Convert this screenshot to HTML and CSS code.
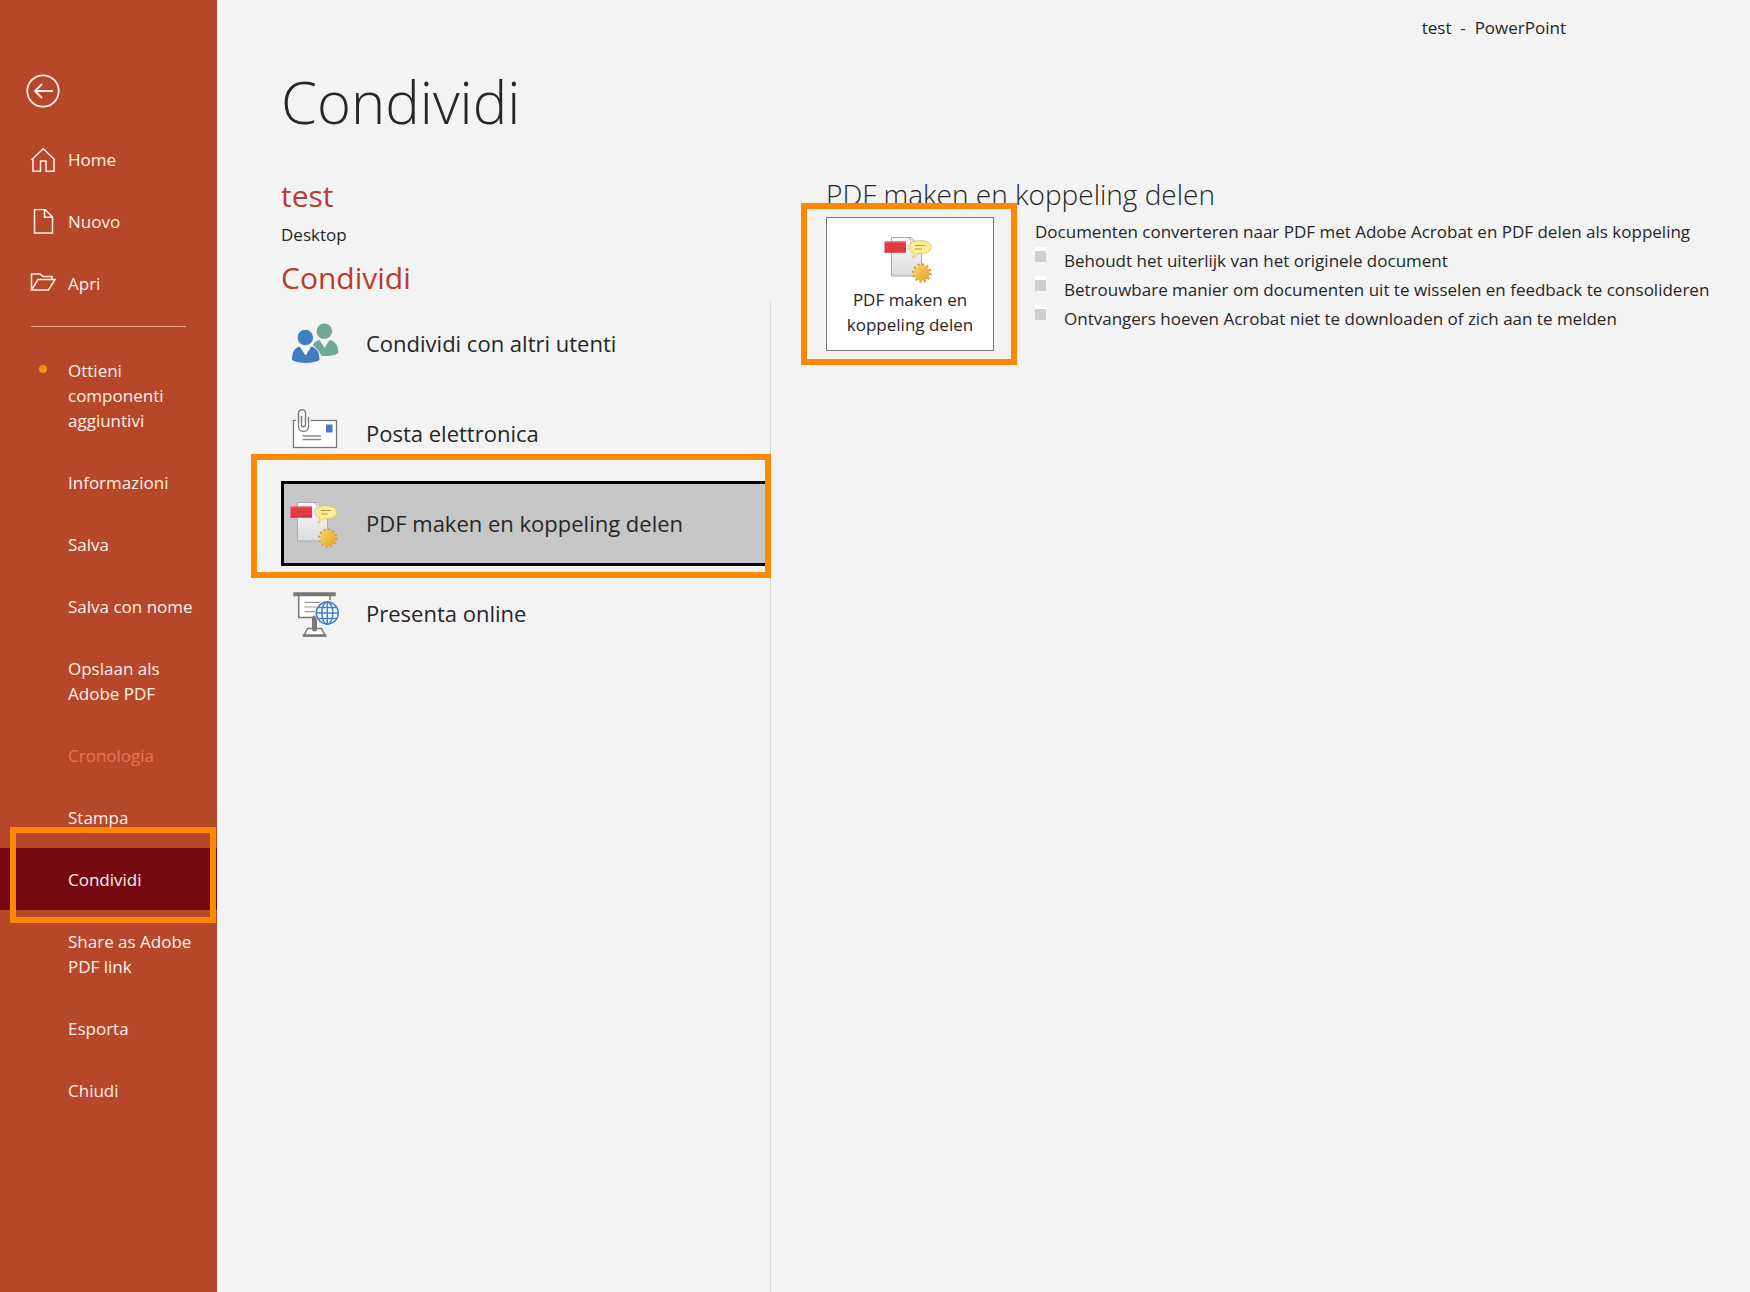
FILE: index.html
```html
<!DOCTYPE html>
<html lang="it">
<head>
  <meta charset="UTF-8">
  <meta name="viewport" content="width=device-width, initial-scale=1.0">
  <title>test - PowerPoint</title>
  <link rel="stylesheet" href="styles.css">
</head>
<body>
  <!-- shared icon, used in the list and on the card -->
  <svg class="sprite" width="0" height="0" aria-hidden="true">
    <defs>
      <linearGradient id="page" x1="0" y1="0" x2="0" y2="1">
        <stop offset="0" stop-color="#fbfbfb"/>
        <stop offset="1" stop-color="#dcdcde"/>
      </linearGradient>
      <linearGradient id="gold" x1="0" y1="0" x2="1" y2="1">
        <stop offset="0" stop-color="#fbd568"/>
        <stop offset="1" stop-color="#e0a22c"/>
      </linearGradient>
    </defs>
    <symbol id="pdf" viewBox="0 0 52 48">
      <path d="M7.5 2.5H27L37.5 13V41H7.5Z" fill="url(#page)" stroke="#a9a9ab"/>
      <path d="M24 2.5C27 4 27 7 26 10L32 8Z" fill="#fff" stroke="#a9a9ab" stroke-width=".7"/>
      <rect x=".5" y="6.5" width="21.5" height="11" fill="#e23a43"/>
      <path d="M.5 7H22" stroke="#ef7078"/>
      <path d="M.5 17H22" stroke="#c92c36"/>
      <path d="M36 5.7c6.5 0 11.2 2.600 11.200 6.500s-4.700 6.500-11.200 6.500c-.8 0-1.500 0-2.200-.1-1.300 2-3 3.600-6 4.400 1.500-1.700 2.200-3.300 2-5-3-1.200-5-3.200-5-5.800 0-3.900 4.700-6.500 11.200-6.500Z" fill="#fbec96" stroke="#d5bd55" stroke-width=".8"/>
      <path d="M31 10.500H41M31 14H38" stroke="#b39a45" stroke-width="1.200"/>
      <circle cx="37.700" cy="38" r="8.400" fill="none" stroke="#d99f2b" stroke-width="2.600" stroke-dasharray="2.200 2.200"/>
      <circle cx="37.700" cy="38" r="7.700" fill="url(#gold)"/>
    </symbol>
  </svg>

  <div class="app">
    <nav class="sidebar">
      <button class="back" type="button" aria-label="Indietro">
        <svg width="34" height="34" viewBox="0 0 34 34" fill="none" stroke="currentColor" stroke-width="1.800">
          <circle cx="17" cy="17" r="15.700"/>
          <path d="M27 17H9M16 10L9 17L16 24"/>
        </svg>
      </button>

      <a class="nav-item" href="#">
        <svg class="nav-icon" viewBox="0 0 26 26"><path d="M1.500 13L13.300 1.800L25 13M3 11.800V24.200H10.500V14H16V24.200H24V11.800"/></svg>
        <span>Home</span>
      </a>
      <a class="nav-item" href="#">
        <svg class="nav-icon" viewBox="0 0 26 26"><path d="M4.500 .5H15L22.500 8V24H4.500ZM14.500 .5V8.300H22.500"/></svg>
        <span>Nuovo</span>
      </a>
      <a class="nav-item" href="#">
        <svg class="nav-icon" viewBox="0 0 26 26"><path d="M1.500 19V3H10L13 5.500H22V8.500M1.500 19L8 8.500H25L18.500 19Z"/></svg>
        <span>Apri</span>
      </a>

      <hr class="divider">

      <a class="nav-item" href="#"><i class="dot"></i><span>Ottieni componenti aggiuntivi</span></a>
      <a class="nav-item text-only" href="#">Informazioni</a>
      <a class="nav-item text-only" href="#">Salva</a>
      <a class="nav-item text-only" href="#">Salva con nome</a>
      <a class="nav-item text-only" href="#">Opslaan als Adobe PDF</a>
      <a class="nav-item text-only disabled" href="#" aria-disabled="true">Cronologia</a>
      <a class="nav-item text-only" href="#">Stampa</a>
      <a class="nav-item text-only active" href="#">Condividi<i class="marker marker-nav"></i></a>
      <a class="nav-item text-only" href="#">Share as Adobe PDF link</a>
      <a class="nav-item text-only" href="#">Esporta</a>
      <a class="nav-item text-only" href="#">Chiudi</a>
    </nav>

    <main class="main">
      <div class="titlebar">test&nbsp; -&nbsp; PowerPoint</div>
      <h1>Condividi</h1>

      <div class="columns">
        <section class="share">
          <h2 class="red">test</h2>
          <p class="location">Desktop</p>
          <h2 class="red">Condividi</h2>

          <div class="options">
            <button class="option" type="button">
              <svg class="option-icon" viewBox="0 0 52 48">
                <circle cx="36.300" cy="11.300" r="7.800" fill="#72a893"/>
                <path d="M25 25C27 21.500 29 20.500 31.500 20L36.500 28L41.500 20C47 21 50.300 25 50.300 33C47 35.500 40 36.300 34 36Z" fill="#72a893"/>
                <path d="M3.500 40C3.500 32 6 27.500 12 26L17.500 35L23 26C29 27.500 32 32 32 40C27 44.500 8 44.500 3.500 40Z" fill="#3f7dbe" stroke="#f3f3f3" stroke-width="1"/>
                <path d="M12.500 26H22.500L17.500 34Z" fill="#fff"/>
                <circle cx="17.300" cy="17.500" r="8.200" fill="#3f7dbe" stroke="#f3f3f3" stroke-width="1"/>
              </svg>
              <span>Condividi con altri utenti</span>
            </button>
            <button class="option" type="button">
              <svg class="option-icon" viewBox="0 0 52 48" fill="none" stroke="#777" stroke-width="1.300">
                <rect x="5.500" y="10.500" width="43" height="27" fill="#fff"/>
                <path d="M8 10.500H22.500" stroke="#f3f3f3" stroke-width="3"/>
                <path d="M10.500 6V16.500C10.500 23 20.500 23 20.500 16.500V7M10.500 16V3.500C10.500-1.800 17.500-1.800 17.500 3.500V14.500C17.500 17.500 13.500 17.500 13.500 14.500V6"/>
                <rect x="38" y="14.500" width="6.500" height="8" fill="#3f7dbe" stroke="none"/>
                <path d="M14.500 26H33M14.500 29.500H33" stroke="#888"/>
              </svg>
              <span>Posta elettronica</span>
            </button>
            <button class="option selected" type="button">
              <svg class="option-icon" viewBox="-2 0 52 48"><use href="#pdf" width="52" height="48"/></svg>
              <span>PDF maken en koppeling delen</span>
              <i class="marker marker-option"></i>
            </button>
            <button class="option" type="button">
              <svg class="option-icon" viewBox="-2 0 52 48" fill="none" stroke="#777" stroke-width="1.500">
                <path d="M8.700 6V27.500H27L40 20V6Z" fill="#fff" stroke="none"/>
                <path d="M8.700 6V27.500H25M40 6V10"/>
                <path d="M3.300 4.300H45.700" stroke-width="4"/>
                <path d="M14.500 12.300H30M14.500 17H27M14.500 21.700H25" stroke="#999" stroke-width="1.200"/>
                <path d="M17.500 38.500H31.500L35 45.500H14Z" fill="#fff"/>
                <path d="M12.700 45.600H36.500" stroke-width="2.500"/>
                <path d="M24.500 28V39" stroke-width="5" stroke-linecap="round"/>
                <circle cx="37.300" cy="23" r="12.300" fill="#f3f3f3" stroke="none"/>
                <g stroke="#4080cc">
                  <circle cx="37.300" cy="23" r="11" fill="#fff"/>
                  <ellipse cx="37.300" cy="23" rx="5.500" ry="11"/>
                  <path d="M37.300 12V34M26.300 23H48.300M28.300 17.500H46.300M28.300 28.500H46.300"/>
                </g>
              </svg>
              <span>Presenta online</span>
            </button>
          </div>
        </section>

        <section class="detail">
          <h2>PDF maken en koppeling delen</h2>
          <div class="detail-body">
            <button class="card" type="button">
              <svg class="option-icon"><use href="#pdf"/></svg>
              <span>PDF maken en koppeling delen</span>
              <i class="marker marker-card"></i>
            </button>
            <div class="description">
              <p>Documenten converteren naar PDF met Adobe Acrobat en PDF delen als koppeling</p>
              <ul>
                <li>Behoudt het uiterlijk van het originele document</li>
                <li>Betrouwbare manier om documenten uit te wisselen en feedback te consolideren</li>
                <li>Ontvangers hoeven Acrobat niet te downloaden of zich aan te melden</li>
              </ul>
            </div>
          </div>
        </section>
      </div>
    </main>
  </div>
</body>
</html>
```
FILE: styles.css
```css
* {
  box-sizing: border-box;
}
body {
  margin: 0;
  font-family: "Segoe UI", "Open Sans", "Noto Sans", sans-serif;
  font-size: 17px;
  font-weight: 500;
  line-height: 25px;
  color: #262626;
  background-color: #f3f3f3;
}
h1, h2, p, ul {
  margin: 0;
  padding: 0;
}
button {
  font: inherit;
  color: inherit;
  cursor: pointer;
}
.sprite {
  position: absolute;
}
.app {
  display: flex;
  min-height: 100vh;
}

/* sidebar */
.sidebar {
  flex: 0 0 217px;
  padding-top: 74px;
  background-color: #b7472a;
  color: #fff0e8;
}
.back {
  display: block;
  width: 34px;
  height: 34px;
  margin: 0 0 20px 26px;
  padding: 0;
  border: none;
  background: none;
}
.back svg {
  display: block;
}
.nav-item {
  display: flex;
  gap: 12px;
  padding: 19px 12px 18px 30px;
  color: inherit;
  text-decoration: none;
}
.text-only {
  display: block;
  position: relative;
  padding-left: 68px;
}
.nav-icon {
  flex: none;
  width: 26px;
  height: 26px;
  margin-bottom: -1px;
  fill: none;
  stroke: currentColor;
  stroke-width: 1.5;
}
.dot {
  flex: none;
  width: 8px;
  height: 8px;
  margin: 7px 9px;
  border-radius: 50%;
  background-color: #f09609;
}
.divider {
  height: 1px;
  margin: 12px 31px;
  border: none;
  background-color: #f0a48c;
}
.disabled {
  color: #e8735a;
}
.active {
  background-color: #750811;
}

/* orange highlight frames */
.marker {
  position: absolute;
  z-index: 1;
  border: 6px solid #ff8800;
  pointer-events: none;
}
.marker-nav {
  inset: -21px 1px -13px 10px;
}
.marker-option {
  inset: -30px -4px -15px -33px;
}
.marker-card {
  inset: -15px -24px -15px -26px;
}

/* main area */
.main {
  flex: 1;
  display: flex;
  flex-direction: column;
  padding-left: 64px;
}
.titlebar {
  padding: 15px 184px 12px 0;
  text-align: right;
}
h1 {
  height: 124px;
  font-size: 58px;
  font-weight: 300;
  line-height: 100px;
}
h2 {
  font-size: 28px;
  font-weight: 300;
  line-height: 36px;
}
.columns {
  flex: 1;
  display: flex;
}
.share {
  flex: 0 0 490px;
  display: flex;
  flex-direction: column;
}
.red {
  font-size: 30px;
  font-weight: 400;
  line-height: 40px;
  color: #b83b2c;
}
.location {
  margin-bottom: 4px;
  line-height: 38px;
}
.options {
  flex: 1;
  display: flex;
  flex-direction: column;
  gap: 5px;
  margin-top: 3px;
  border-right: 1px solid #dcdcdc;
}
.option {
  position: relative;
  display: flex;
  align-items: center;
  gap: 26px;
  height: 85px;
  padding: 0 4px;
  border: 3px solid transparent;
  background: none;
  font-size: 22px;
  font-weight: 400;
  text-align: left;
}
.option-icon {
  flex: none;
  width: 52px;
  height: 48px;
  overflow: visible;
}
.selected {
  border-color: #000;
  background-color: #c6c6c6;
}
.detail {
  flex: 1;
  padding-left: 55px;
}
.detail-body {
  display: flex;
  gap: 41px;
  margin-top: 5px;
}
.card {
  position: relative;
  flex: 0 0 168px;
  height: 134px;
  display: flex;
  flex-direction: column;
  align-items: center;
  gap: 4px;
  padding: 17px 8px 0;
  border: 1px solid #777;
  background-color: #fff;
}
.description {
  line-height: 29px;
}
.description ul {
  list-style: none;
}
.description li {
  display: flex;
  gap: 18px;
}
.description li::before {
  content: "";
  width: 11px;
  height: 11px;
  margin-top: 1px;
  border-top: 4px solid #fff;
  background-color: #cecece;
}
```
